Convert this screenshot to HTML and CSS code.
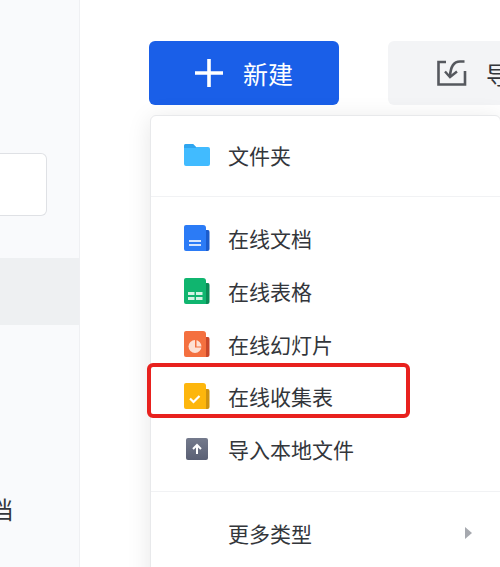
FILE: index.html
```html
<!DOCTYPE html>
<html lang="zh-CN">
<head>
    <meta charset="UTF-8">
    <title>新建</title>
    <link rel="stylesheet" href="styles.css">
</head>
<body>
    <aside class="sidebar">
        <div class="search-box"></div>
        <div class="nav-active"></div>
        <div class="nav-label"><span>在线文档</span></div>
    </aside>

    <main class="main">
        <div class="toolbar">
            <button class="btn-new">
                <svg width="30" height="30" viewBox="0 0 30 30"><path d="M15 1v28M1 15h28" stroke="#fff" stroke-width="3.6" fill="none"/></svg>
                <span>新建</span>
            </button>
            <button class="btn-import">
                <svg width="30" height="28" viewBox="0 0 30 28" fill="none" stroke="#55585e" stroke-width="2.6">
                    <path d="M9 3H1.500v22.500h26.500V12"/>
                    <path d="M27.500 2.500H23c-6 0-9.500 5-10 15"/>
                    <path d="M8 12.500l5 5.500 7-5.500" stroke-width="2.400"/>
                </svg>
                <span>导入</span>
            </button>
        </div>

        <div class="menu">
            <div class="menu-group group-first">
                <div class="menu-item">
                    <svg class="icon" width="26" height="22" viewBox="0 0 26 22">
                        <path d="M0 2q0-2 2-2h7l3 3h12q2 0 2 2v15q0 2-2 2H2q-2 0-2-2z" fill="#41bbff"/>
                        <path d="M0 2q0-2 2-2h7l3 3v1H0z" fill="#2fa5ef"/>
                    </svg>
                    <span>文件夹</span>
                </div>
            </div>
            <div class="menu-group group-types">
                <div class="menu-item">
                    <svg class="icon" width="26" height="26" viewBox="0 0 26 26">
                        <path d="M18 5h6q1.500 0 1.500 2v17q0 2-2 2H8z" fill="#1b5ccc"/>
                        <path d="M2 0h17q3 0 3 3v23H2q-2 0-2-2V2q0-2 2-2z" fill="#2b7bf6"/>
                        <path d="M5 15h12v2H5zM5 19h12v2H5z" fill="#d5e4fd"/>
                    </svg>
                    <span>在线文档</span>
                </div>
                <div class="menu-item">
                    <svg class="icon" width="26" height="26" viewBox="0 0 26 26">
                        <path d="M18 5h6q1.500 0 1.500 2v17q0 2-2 2H8z" fill="#0b8a55"/>
                        <path d="M2 0h17q3 0 3 3v23H2q-2 0-2-2V2q0-2 2-2z" fill="#10b56f"/>
                        <path d="M4 14h6.500v3H4zM12 14h6.500v3H12zM4 19h6.500v3H4zM12 19h6.500v3H12z" fill="#d4f3e4"/>
                    </svg>
                    <span>在线表格</span>
                </div>
                <div class="menu-item">
                    <svg class="icon" width="26" height="26" viewBox="0 0 26 26">
                        <path d="M18 6h6q1.500 0 1.500 2v16q0 2-2 2H8z" fill="#c9472a"/>
                        <path d="M2 0h17q3 0 3 3v23H2q-2 0-2-2V2q0-2 2-2z" fill="#f4703f"/>
                        <circle cx="11" cy="15.500" r="6.500" fill="#fde0d3"/>
                        <path d="M11 15.500V9h1.500v6.500H18v1h-7z" fill="#f4703f"/>
                    </svg>
                    <span>在线幻灯片</span>
                </div>
                <div class="menu-item">
                    <svg class="icon" width="26" height="26" viewBox="0 0 26 26">
                        <path d="M18 6h6q1.500 0 1.500 2v16q0 2-2 2H8z" fill="#cf9310"/>
                        <path d="M2 0h17q3 0 3 3v23H2q-2 0-2-2V2q0-2 2-2z" fill="#fdb60d"/>
                        <path d="M6 15.500l3.500 3.500 6-6" stroke="#fff" stroke-width="2.200" fill="none"/>
                    </svg>
                    <span>在线收集表</span>
                </div>
                <div class="menu-item">
                    <svg class="icon icon-upload" width="22" height="22" viewBox="0 0 22 22">
                        <defs>
                            <linearGradient id="upload-bg" x1="0" y1="0" x2="0" y2="1">
                                <stop offset="0" stop-color="#747a8c"/>
                                <stop offset="1" stop-color="#5a6074"/>
                            </linearGradient>
                        </defs>
                        <rect width="22" height="22" rx="2" fill="url(#upload-bg)"/>
                        <path d="M11 16V7.500M7 11l4-4 4 4" stroke="#fff" stroke-width="2" fill="none"/>
                    </svg>
                    <span>导入本地文件</span>
                </div>
            </div>
            <div class="menu-group group-more">
                <div class="menu-item item-more">
                    <span>更多类型</span>
                    <i class="arrow"></i>
                </div>
            </div>
            <div class="highlight"></div>
        </div>
    </main>
</body>
</html>
```

FILE: styles.css
```css
body {
    margin: 0;
    display: flex;
    height: 567px;
    overflow: hidden;
    background-color: #fff;
    font-family: "Noto Sans CJK SC", "Liberation Sans", sans-serif;
    color: #33363b;
}
.sidebar {
    width: 80px;
    flex-shrink: 0;
    padding-top: 153px;
    box-sizing: border-box;
    background-color: #f9fafc;
    border-right: 1px solid #eff0f3;
}
.search-box {
    width: 46px;
    height: 61px;
    background-color: #fff;
    border: 1px solid #dfe1e5;
    border-left: none;
    border-radius: 0 6px 6px 0;
}
.nav-active {
    height: 67px;
    margin-top: 42px;
    background-color: #eef0f2;
}
.nav-label {
    display: flex;
    justify-content: flex-end;
    width: 13px;
    margin-top: 167px;
    overflow: hidden;
    font-size: 24px;
    line-height: 34px;
    white-space: nowrap;
}
.main {
    flex: 1;
    min-width: 0;
    padding: 41px 0 0 69px;
    overflow: hidden;
}
.toolbar {
    display: flex;
    gap: 49px;
    width: 600px;
}
button {
    display: flex;
    align-items: center;
    height: 64px;
    border: none;
    border-radius: 6px;
    font-family: inherit;
    font-size: 24px;
}
.btn-new {
    width: 190px;
    padding: 0 0 0 45px;
    gap: 19px;
    background-color: #1a5fe8;
    color: #fff;
    font-size: 25px;
}
.btn-import {
    width: 200px;
    padding: 0 0 0 49px;
    gap: 19px;
    background-color: #f3f4f6;
    color: #33363b;
}
.menu {
    position: relative;
    width: 349px;
    margin: 10px 0 0 1px;
    padding-bottom: 40px;
    background-color: #fff;
    border: 1px solid #e8e9eb;
    border-radius: 6px;
    box-shadow: 0 4px 24px rgba(0, 0, 0, 0.1);
}
.menu-group {
    border-bottom: 1px solid #f1f2f4;
}
.group-first {
    padding: 13px 0 14px;
}
.group-types {
    padding: 15px 0 15px;
}
.group-more {
    padding: 15px 0 0;
    border-bottom: none;
}
.menu-item {
    display: flex;
    align-items: center;
    gap: 18px;
    height: 52.75px;
    padding-left: 33px;
    font-size: 21px;
}
.icon-upload {
    margin: 0 2px;
}
.item-more {
    padding-left: 77px;
    padding-right: 28px;
    justify-content: space-between;
}
.arrow {
    width: 0;
    height: 0;
    border-left: 7px solid #a6a9af;
    border-top: 6px solid transparent;
    border-bottom: 6px solid transparent;
}
.highlight {
    position: absolute;
    left: -4px;
    top: 247px;
    width: 255px;
    height: 47px;
    border: 4px solid #e8211e;
    border-radius: 6px;
}
```
